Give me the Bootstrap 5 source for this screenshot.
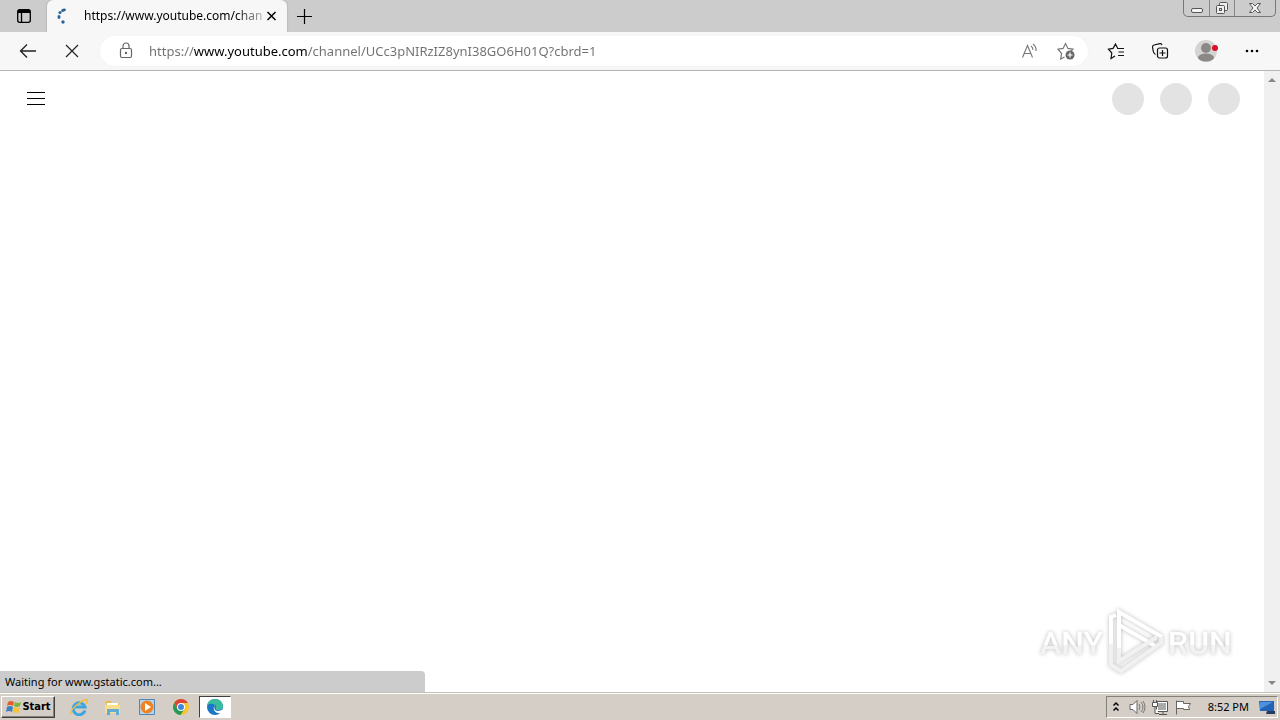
<!DOCTYPE html>
<html lang="en">
<head>
<meta charset="utf-8">
<meta name="viewport" content="width=device-width, initial-scale=1">
<title>https://www.youtube.com/channel</title>
<link href="https://cdn.jsdelivr.net/npm/bootstrap@5.3.0/dist/css/bootstrap.min.css" rel="stylesheet">
<style>
  body { font-family: "Noto Sans", "Open Sans", sans-serif; font-size: 12px; line-height: 16px; color: #000; background: #fff; }
  svg { display: block; flex: none; }
  button { color: inherit; background: none; border: 0; padding: 0; }
  .plain { display: flex; align-items: center; justify-content: center; flex: none; }
  .tabstrip { height: 32px; background: #ccc; }
  .strip-menu { width: 47px; }
  .browser-tab { width: 240px; background: #f7f7f7; border-radius: 6px 6px 0 0; box-shadow: 0 0 2px #999; padding: 0 9px; clip-path: inset(0 -3px 0 -3px); }
  .tab-title { margin-left: 12px; white-space: nowrap; font-size: 12px; -webkit-mask-image: linear-gradient(90deg, #000 85%, #0004); mask-image: linear-gradient(90deg, #000 85%, #0004); }
  .new-tab { width: 34px; }
  .win-controls { height: 17px; margin-right: 4px; border: 1px solid #777; border-top: 0; border-radius: 0 0 5px 5px; }
  .win-controls button { width: 25px; }
  .win-controls button + button { border-left: 1px solid #888; }
  .win-controls button:last-child { width: 41px; }
  .toolbar { height: 39px; background: #f7f7f7; border-bottom: 1px solid #b4b4b4; padding: 0 6px; }
  .toolbar .plain { width: 44px; height: 32px; }
  .toolbar .profile { width: 48px; }
  .toolbar .addr .plain { width: 36px; }
  .addr { height: 30px; background: #fff; border-radius: 15px; margin: 0 6px; padding: 0 4px 0 8px; box-shadow: 0 0 2px #eee; }
  .addr input { border: 0; outline: 0; padding: 0; margin-left: 5px; min-width: 0; height: 22px; font-size: 13px; color: #707070; background: linear-gradient(90deg, #707070 45px, #000 45px, #000 158px, #707070 158px); -webkit-background-clip: text; background-clip: text; -webkit-text-fill-color: transparent; }
  .avatar-dot { width: 32px; height: 32px; border-radius: 50%; background: #e3e3e3; }
  .page-header { height: 56px; padding: 0 24px; }
  .scroll-rail { width: 16px; background: #f0f0f0; padding: 6px 0; }
  .status { position: absolute; left: 0; bottom: 0; width: 33.2%; height: 21px; padding: 3px 5px; background: #ccc; border-radius: 0 4px 0 0; font-size: 11px; }
  .watermark { position: absolute; right: 46px; bottom: 18px; filter: drop-shadow(0 0 2px #bbb); }
  .taskbar { height: 28px; background: #d5cec6; border-top: 1px solid #c5c2bc; box-shadow: inset 0 1px #fff; padding: 2px 2px 2px 1px; }
  .start { width: 54px; height: 22px; border: 1px solid; border-color: #fff #404040 #404040 #fff; box-shadow: inset -1px -1px #858078; font: bold 11px/18px "DejaVu Sans Condensed", sans-serif; }
  .launchers { gap: 2px; }
  .launch { width: 32px; height: 22px; }
  .launch.running { background: #fff; border: 1px solid; border-color: #404040 #fff #fff #404040; }
  .tray { height: 22px; border: 1px solid; border-color: #858078 #fff #fff #858078; padding: 0 2px 0 5px; font-size: 11px; }
  .clock { margin: 0 10px 0 16px; }
</style>
</head>
<body>
<div class="d-flex flex-column min-vh-100">
  <header>
    <div class="tabstrip d-flex">
      <button class="plain strip-menu" aria-label="Tab actions">
        <svg width="16" height="16" viewBox="0 0 16 16" fill="none" stroke="#000" stroke-width="1.3"><rect x="1.700" y="1.700" width="12.600" height="12.600" rx="2"/><path d="M2 3.500h12" stroke-width="3"/><path d="M5.500 5v9"/></svg>
      </button>
      <div class="browser-tab d-flex align-items-center">
        <svg width="16" height="16" viewBox="0 0 16 16" fill="#2c6595"><ellipse cx="7.500" cy="2" rx="2.500" ry="1.500" transform="rotate(-25 8 2)"/><circle cx="4" cy="4.500" r="1.600"/><ellipse cx="3" cy="9" rx="1.500" ry="2"/><circle cx="7" cy="14" r="1.700"/></svg>
        <div class="tab-title">https://www.youtube.com/chan</div>
        <button class="plain ms-auto" aria-label="Close tab"><svg width="12" height="12" viewBox="0 0 12 12" stroke="#000" stroke-width="1.500"><path d="M1.500 2l8 8M9.500 2l-8 8"/></svg></button>
      </div>
      <button class="plain new-tab" aria-label="New tab"><svg width="16" height="16" viewBox="0 0 16 16" stroke="#000" stroke-width="1.200"><path d="M8.500 1v15M1 8.500h15"/></svg></button>
      <div class="win-controls d-flex ms-auto">
        <button class="plain" aria-label="Minimize"><svg width="14" height="14" viewBox="0 0 14 14" fill="#f5f5f5" stroke="#555"><rect x="1.500" y="7.500" width="11" height="4" rx="1.500"/></svg></button>
        <button class="plain" aria-label="Restore"><svg width="14" height="14" viewBox="0 0 14 14" fill="#eee" stroke="#555"><rect x="4.500" y="1.500" width="8" height="8" rx="1"/><rect x="1.500" y="4.500" width="8" height="8" rx="1"/><rect x="4.500" y="7.500" width="2" height="2"/></svg></button>
        <button class="plain" aria-label="Close"><svg width="14" height="14" viewBox="0 0 14 14" fill="#f5f5f5" stroke="#555"><path d="M1.500 2.500h3L7 5l2.500-2.500h3L9 7l3.500 4.500h-3L7 9l-2.500 2.500h-3L5 7z"/></svg></button>
      </div>
    </div>
    <div class="toolbar d-flex align-items-center">
      <button class="plain" aria-label="Back"><svg width="18" height="16" viewBox="0 0 18 16" fill="none" stroke="#222" stroke-width="1.300"><path d="M17 8H2M8 1.500L1.500 8 8 14.500"/></svg></button>
      <button class="plain" aria-label="Stop"><svg width="14" height="14" viewBox="0 0 14 14" stroke="#222" stroke-width="1.200"><path d="M1 1l12 12M13 1L1 13"/></svg></button>
      <div class="addr d-flex align-items-center flex-grow-1">
        <button class="plain" aria-label="Site information"><svg width="14" height="18" viewBox="0 0 14 18" fill="none" stroke="#666" stroke-width="1.200"><rect x="1.500" y="6.500" width="11" height="9" rx="1.500"/><path d="M4 6.500V4a3 3 0 0 1 6 0v2.500"/><circle cx="7" cy="11" r=".6" fill="#666"/></svg></button>
        <input class="flex-grow-1" type="text" aria-label="Address" spellcheck="false" value="https://www.youtube.com/channel/UCc3pNIRzIZ8ynI38GO6H01Q?cbrd=1">
        <button class="plain" aria-label="Read aloud"><svg width="18" height="16" viewBox="0 0 18 16" fill="none" stroke="#777" stroke-width="1.100"><path d="M1.500 14.500L6.500 2.500l5 12M3.200 10.500h6.600M10 3q2 1.500 2 4M12 1q3.500 2.500 3 7"/></svg></button>
        <button class="plain" aria-label="Add to favorites"><svg width="18" height="18" viewBox="0 0 18 18" fill="none" stroke="#777" stroke-width="1.200"><path d="M7.500 15l-3.800 2 .9-5.500L1 7.200l5.100-.8L8.500 1.500l2.400 4.900 5.100.8-2 1.800"/><circle cx="13" cy="13" r="4.500" fill="#666" stroke="none"/><path d="M10.500 13h5M13 10.500v5" stroke="#fff"/></svg></button>
      </div>
      <button class="plain" aria-label="Favorites"><svg width="18" height="18" viewBox="0 0 18 18" fill="none" stroke="#111" stroke-width="1.200"><path d="M8 14l-4 2.500.8-5.500L1.500 7.200l4.600-.8L8.500 2l2.200 4.500H17M11.500 10H17M11 13.500h6"/></svg></button>
      <button class="plain" aria-label="Collections"><svg width="18" height="18" viewBox="0 0 18 18" fill="none" stroke="#111" stroke-width="1.200"><path d="M4.500 12.500Q2.500 11.500 2.200 9L1.500 5Q1.300 3.500 3 3L9 1.700q1.500-.3 2 1.500"/><rect x="6.500" y="6" width="10" height="10" rx="2"/><path d="M11.500 8v6M8.500 11h6"/></svg></button>
      <button class="plain profile" aria-label="Profile"><svg width="24" height="24" viewBox="0 0 24 24"><circle cx="12" cy="12" r="11" fill="#d4d4d2"/><circle cx="12" cy="9" r="5" fill="#8c8886"/><ellipse cx="12" cy="18.500" rx="8" ry="4" fill="#8c8886"/><circle cx="21" cy="9" r="3" fill="#dc1021"/></svg></button>
      <button class="plain" aria-label="Settings and more"><svg width="16" height="6" viewBox="0 0 16 6"><circle cx="3" cy="3" r="1.300"/><circle cx="8" cy="3" r="1.300"/><circle cx="13" cy="3" r="1.300"/></svg></button>
    </div>
  </header>
  <main class="d-flex flex-grow-1 position-relative">
    <div class="flex-grow-1">
      <div class="page-header d-flex align-items-center">
        <button class="plain" aria-label="Guide"><svg width="24" height="24" viewBox="0 0 24 24" stroke="#000"><path d="M3 5.500h18M3 11.500h18M3 17.500h18"/></svg></button>
        <div class="d-flex gap-3 ms-auto"><span class="avatar-dot"></span><span class="avatar-dot"></span><span class="avatar-dot"></span></div>
      </div>
    </div>
    <div class="scroll-rail d-flex flex-column justify-content-between align-items-center">
      <svg width="10" height="6" viewBox="0 0 10 6" fill="#888"><path d="M1 5l4-4 4 4z"/></svg>
      <svg width="10" height="6" viewBox="0 0 10 6" fill="#888"><path d="M1 1l4 4 4-4z"/></svg>
    </div>
    <div class="status">Waiting for www.gstatic.com...</div>
    <svg class="watermark" width="198" height="70" viewBox="0 0 198 70">
      <defs><linearGradient id="fade" x1="0" y1="0" x2="0" y2="1"><stop offset=".55" stop-color="#fff"/><stop offset=".55" stop-color="#f3f3f3"/></linearGradient></defs>
      <g fill="url(#fade)" font-family="Roboto, sans-serif" font-weight="500" font-size="32">
        <text x="4" y="50">ANY</text>
        <text x="132" y="50">RUN</text>
      </g>
      <g fill="none" stroke="#fff" stroke-width="4">
        <path d="M75 42V13l5-2M83 45V8l43 25M83 52V21l38 22"/>
        <path d="M75 40v21l10 6 40-28v-6M83 44v13l38-24" stroke="#f1f1f1"/>
      </g>
    </svg>
  </main>
  <footer class="taskbar d-flex align-items-center">
    <button class="start d-flex align-items-center justify-content-center" aria-label="Start">
      <svg width="17" height="16" viewBox="0 0 17 16"><path d="M3 3q3-2 6 0L8 7Q5 5 2 7z" fill="#e4602b"/><path d="M10 3q3 2 6 0l-1 4q-3 2-6 0z" fill="#7cb53e"/><path d="M2 8q3-2 6 0l-1 5q-3-2-6 0z" fill="#3d7fc3"/><path d="M9 8q3 2 6 0l-1 5q-3 2-6 0z" fill="#f6c33a"/></svg>Start
    </button>
    <div class="launchers d-flex ps-2">
      <button class="plain launch" aria-label="Internet Explorer"><svg width="18" height="18" viewBox="0 0 18 18" fill="none"><path d="M15 12.500A6 6 0 1 1 15 9H5" stroke="#3da5df" stroke-width="3"/><path d="M1 16Q0 12 8 6t9-4q1 1-1 4" stroke="#f0bd3c" stroke-width="1.500"/></svg></button>
      <button class="plain launch" aria-label="File Explorer"><svg width="18" height="18" viewBox="0 0 18 18"><path d="M2 3h5l1 2h7v9H2z" fill="#e5ba51"/><path d="M3 5h11v2H3z" fill="#fff"/><path d="M1 7h15v8H1z" fill="#f7df8c"/><path d="M3 17v-6h12v6h-3v-3H6v3z" fill="#62abd4"/></svg></button>
      <button class="plain launch" aria-label="Media Player"><svg width="18" height="18" viewBox="0 0 18 18"><path d="M1.500 1.500h15v15h-15z" fill="#b5d5ed" stroke="#4f87b8"/><circle cx="9" cy="9" r="6.500" fill="#f08222"/><path d="M7 5l6 4-6 4z" fill="#fff"/></svg></button>
      <button class="plain launch" aria-label="Chrome"><svg width="18" height="18" viewBox="0 0 18 18"><circle cx="9" cy="9" r="8" fill="#f9c62a"/><path d="M2.100 5A8 8 0 0 1 15.900 5H9L5.500 11z" fill="#dc4437"/><path d="M2.100 5A8 8 0 0 0 8.500 17l4-6H5.500z" fill="#239b57"/><circle cx="9" cy="9" r="4" fill="#fff"/><circle cx="9" cy="9" r="3" fill="#4285dc"/></svg></button>
      <button class="plain launch running" aria-label="Edge"><svg width="18" height="18" viewBox="0 0 18 18"><circle cx="9" cy="9" r="8" fill="#1b76c5"/><path d="M1 8Q2 1 9 1t8 7q0 4-5 4-3 0-2-2 1-3-3-4Q3 5 1 8z" fill="#39bd9c"/><path d="M8.500 7.500q-1 5 3 5.500 3 0 6-2l-1 4q-5 1-7-1-3-3-1-6.500z" fill="#fff"/></svg></button>
    </div>
    <div class="tray d-flex align-items-center ms-auto">
      <button class="plain me-2" aria-label="Show hidden icons"><svg width="8" height="12" viewBox="0 0 8 12" fill="none" stroke="#000" stroke-width="1.500"><path d="M1.500 4.500L4 2l2.500 2.500M1.500 9.500L4 7l2.500 2.500"/></svg></button>
      <svg width="18" height="18" viewBox="0 0 18 18" fill="#fff" stroke="#666"><path d="M2 6.500h3l4-4v13l-4-4H2z"/><path d="M11 6q2 3 0 6M13 4q4 5 0 10M15 3q4 6 0 12" fill="none" stroke="#777"/></svg>
      <svg class="ms-1" width="20" height="18" viewBox="0 0 20 18" fill="#fff" stroke="#555"><path d="M6.500 3.500h11v10h-11zM9 16.500h8M13 14v2"/><path d="M8 5h8v7H8z" fill="#aaa" stroke="none"/><path d="M2.500 4.500h5v4h-5zM3.500 2v2M6.500 2v2M5 9v6.500h4"/></svg>
      <svg class="ms-1" width="18" height="18" viewBox="0 0 18 18" fill="#fff" stroke="#666"><path d="M2.500 2.500v14M2.500 3.500h7v2h7l-2 3 1 3h-6v-1h-7z"/></svg>
      <span class="clock">8:52 PM</span>
      <svg width="16" height="16" viewBox="0 0 16 16"><path d="M0 2h15v10H1z" fill="#2363b5"/><path d="M1 3h13L1 10z" fill="#4d92da"/><path d="M8 12h8v3H7z" fill="#263c5f"/></svg>
    </div>
  </footer>
</div>
<script src="https://cdn.jsdelivr.net/npm/bootstrap@5.3.0/dist/js/bootstrap.bundle.min.js"></script>
</body>
</html>
